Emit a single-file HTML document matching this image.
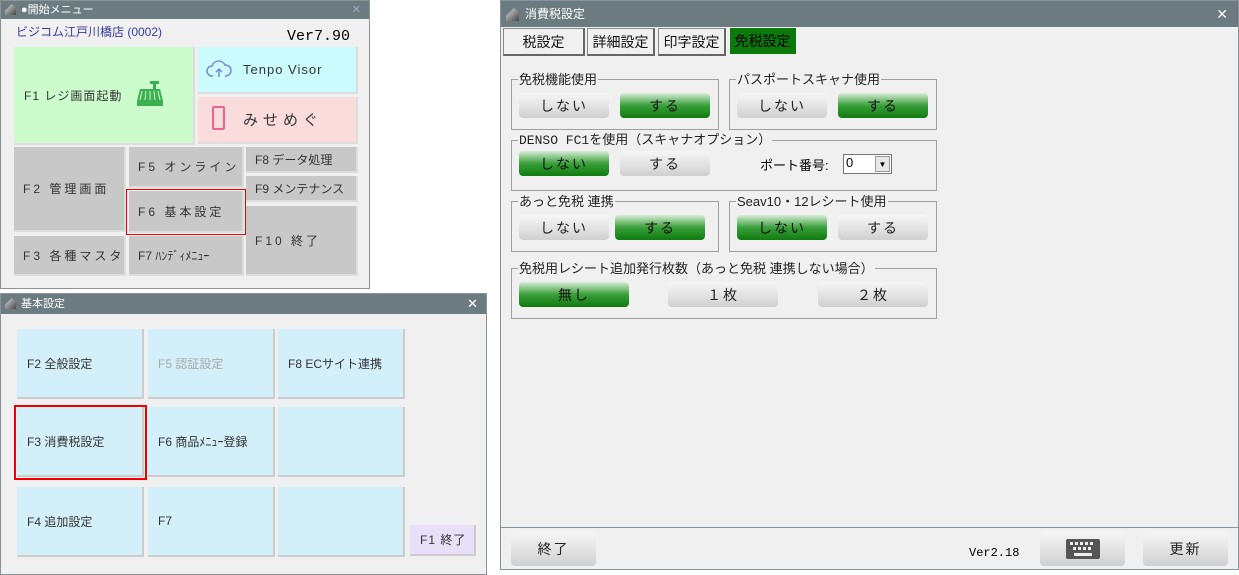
<!DOCTYPE html><html><head><meta charset="utf-8"><style>
*{box-sizing:border-box;margin:0;padding:0}
body{width:1239px;height:575px;background:#fff;position:relative;overflow:hidden;font-family:"Liberation Sans","Noto Sans CJK JP",sans-serif;}
.a{position:absolute}
.win{position:absolute;background:#f0f0f0;border:1px solid #8a9498}
.tb{position:absolute;left:0;right:0;top:0;background:#6b7b80;color:#fff;font-size:11px;padding-left:20px}
.b{position:absolute;display:flex;align-items:center;font-size:12px;color:#333;letter-spacing:1px;white-space:nowrap;overflow:hidden;border-right:2px solid #c8c8c8;border-bottom:2px solid #c8c8c8}
.g{background:#c8c8c8;border-right-color:#ddd;border-bottom-color:#ddd;padding-left:9px}
.c{background:#d3eff9;padding-left:10px;font-size:12px;letter-spacing:0}
.grp{position:absolute;border:1px solid #a0a0a0}
.lab{position:absolute;background:#f0f0f0;font-size:13px;color:#222;top:-8px;left:6px;padding:0 1px;line-height:15px;white-space:nowrap}
.btn{position:absolute;height:25px;border-radius:4px;font-size:14px;display:flex;align-items:center;justify-content:center;letter-spacing:2px;color:#222;background:linear-gradient(#f6f6f6,#e0e0e0 60%,#cfcfcf)}
.on{background:linear-gradient(#d8ecd8,#3aa03a 50%,#0f7a0f);color:#111}
.tab{position:absolute;top:27px;height:28px;border:1px solid #888;border-right:2px solid #666;border-bottom:2px solid #666;background:#f0f0f0;font-size:14px;display:flex;align-items:center;justify-content:center;color:#111}
.icon{position:absolute;left:4px;top:3px;width:11px;height:11px;background:linear-gradient(135deg,#ddd,#444);clip-path:polygon(0 60%,60% 0,100% 30%,100% 100%,0 100%)}
</style></head><body>
<!-- window 1 -->
<div class="win" style="left:0;top:0;width:370px;height:289px">
<div class="tb" style="height:18px;line-height:18px">●開始メニュー<span style="position:absolute;right:8px;color:#aab">✕</span></div><div class="icon"></div>
<div class="a" style="left:15px;top:22px;font-size:12px;color:#3a3aa0">ビジコム江戸川橋店 (0002)</div>
<div class="a" style="left:286px;top:27px;font-size:15px;font-family:'Liberation Mono',monospace;color:#000">Ver7.90</div>
<div class="b" style="left:13px;top:46px;width:181px;height:98px;background:#ccfccc;padding-left:10px;border-color:#ddd">F1 レジ画面起動
<svg class="a" style="left:122px;top:34px" width="28" height="26" viewBox="0 0 28 26"><rect x="14" y="0" width="9" height="3" fill="#3cb050"/><rect x="17" y="3" width="3" height="5" fill="#3cb050"/><path d="M4 8h20l3 12H1z" fill="#3cb050"/><path d="M6 10l-2 9M10 10l-1 9M14 10v9M18 10l1 9M22 10l2 9" stroke="#ccfccc" stroke-width="1"/><rect x="1" y="20" width="26" height="5" fill="#3cb050"/></svg></div>
<div class="b" style="left:197px;top:46px;width:160px;height:47px;background:#ccfbfd;padding-left:45px;font-size:13px;border-color:#ddd">Tenpo Visor
<svg class="a" style="left:8px;top:12px" width="26" height="20" viewBox="0 0 26 20"><path d="M7 17H6a5 5 0 0 1 0-10 7 7 0 0 1 13-1 5 5 0 0 1 1 11h-1" fill="none" stroke="#7a8ad8" stroke-width="1.5"/><path d="M13 18V10M10 13l3-3 3 3" fill="none" stroke="#7a8ad8" stroke-width="1.5"/></svg></div>
<div class="b" style="left:197px;top:96px;width:160px;height:47px;background:#fbdcdc;padding-left:45px;font-size:15px;letter-spacing:5px;border-color:#ddd">みせめぐ
<div class="a" style="left:14px;top:9px;width:13px;height:24px;border:2px solid #f06090;border-radius:2px"></div></div>
<div class="b g" style="left:13px;top:146px;width:112px;height:85px;letter-spacing:3px">F2 管理画面</div>
<div class="b g" style="left:128px;top:146px;width:115px;height:41px;letter-spacing:3px">F5 オンライン</div>
<div class="b g" style="left:128px;top:190px;width:115px;height:42px;letter-spacing:3px">F6 基本設定</div>
<div class="a" style="left:125px;top:188px;width:120px;height:46px;border:1px solid #e00"></div>
<div class="b g" style="left:245px;top:146px;width:112px;height:26px;font-size:12px;letter-spacing:0">F8 データ処理</div>
<div class="b g" style="left:245px;top:175px;width:112px;height:26px;font-size:12px;letter-spacing:0">F9 メンテナンス</div>
<div class="b g" style="left:245px;top:205px;width:112px;height:70px;letter-spacing:3px">F10 終了</div>
<div class="b g" style="left:13px;top:235px;width:112px;height:40px;letter-spacing:3px">F3 各種マスタ</div>
<div class="b g" style="left:128px;top:235px;width:115px;height:40px;font-size:12px;letter-spacing:0">F7 ﾊﾝﾃﾞｨﾒﾆｭｰ</div>
</div>
<!-- window 2 -->
<div class="win" style="left:0;top:293px;width:487px;height:282px">
<div class="tb" style="height:20px;line-height:20px">基本設定<span style="position:absolute;right:8px;font-size:13px">✕</span></div><div class="icon" style="top:4px"></div>
<div class="b c" style="left:16px;top:35px;width:127px;height:70px;border-color:#ccc">F2 全般設定</div>
<div class="b c" style="left:147px;top:35px;width:127px;height:70px;color:#aaa;border-color:#ccc">F5 認証設定</div>
<div class="b c" style="left:277px;top:35px;width:127px;height:70px;border-color:#ccc">F8 ECサイト連携</div>
<div class="b c" style="left:16px;top:113px;width:127px;height:70px;border-color:#ccc">F3 消費税設定</div>
<div class="a" style="left:13px;top:111px;width:133px;height:75px;border:2px solid #e00"></div>
<div class="b c" style="left:147px;top:113px;width:127px;height:70px;border-color:#ccc">F6 商品ﾒﾆｭｰ登録</div>
<div class="b c" style="left:277px;top:113px;width:127px;height:70px;border-color:#ccc"></div>
<div class="b c" style="left:16px;top:193px;width:127px;height:70px;border-color:#ccc">F4 追加設定</div>
<div class="b c" style="left:147px;top:193px;width:127px;height:70px;border-color:#ccc">F7</div>
<div class="b c" style="left:277px;top:193px;width:127px;height:70px;border-color:#ccc"></div>
<div class="b" style="left:409px;top:231px;width:66px;height:31px;background:#e8e0f8;padding-left:10px;font-size:12px;border-color:#ccc">F1 終了</div>
</div>
<!-- window 3 -->
<div class="win" style="left:500px;top:0;width:739px;height:570px">
<div class="tb" style="height:26px;line-height:26px;padding-left:24px;font-size:12px">消費税設定<span style="position:absolute;right:10px;font-size:14px">✕</span></div><div class="icon" style="top:7px;left:5px;width:13px;height:13px"></div>
<div class="tab" style="left:2px;width:82px">税設定</div>
<div class="tab" style="left:86px;width:68px">詳細設定</div>
<div class="tab" style="left:157px;width:68px">印字設定</div>
<div class="tab" style="left:229px;width:66px;background:#0a7a0a;border-color:#0a7a0a;color:#000;height:26px">免税設定</div>
<div class="grp" style="left:10px;top:78px;width:208px;height:51px"><div class="lab">免税機能使用</div></div>
<div class="grp" style="left:228px;top:78px;width:208px;height:51px"><div class="lab">パスポートスキャナ使用</div></div>
<div class="btn" style="left:18px;top:92px;width:90px">しない</div><div class="btn on" style="left:119px;top:92px;width:90px">する</div>
<div class="btn" style="left:236px;top:92px;width:90px">しない</div><div class="btn on" style="left:337px;top:92px;width:90px">する</div>
<div class="grp" style="left:10px;top:139px;width:426px;height:51px"><div class="lab" style="font-family:'Liberation Mono','Noto Sans CJK JP',monospace">DENSO FC1を使用（スキャナオプション）</div></div>
<div class="btn on" style="left:18px;top:150px;width:90px">しない</div><div class="btn" style="left:119px;top:150px;width:90px">する</div>
<div class="a" style="left:259px;top:154px;font-size:13px">ポート番号:</div>
<div class="a" style="left:342px;top:153px;width:49px;height:20px;background:#fff;border:1px solid #777;font-size:13px;padding-left:2px">0<div class="a" style="right:1px;top:1px;width:15px;height:16px;background:#e8e8e8;border:1px solid #999;font-size:8px;text-align:center;line-height:15px">▼</div></div>
<div class="grp" style="left:10px;top:200px;width:208px;height:51px"><div class="lab">あっと免税 連携</div></div>
<div class="grp" style="left:228px;top:200px;width:208px;height:51px"><div class="lab">Seav10・12レシート使用</div></div>
<div class="btn" style="left:18px;top:214px;width:90px">しない</div><div class="btn on" style="left:114px;top:214px;width:90px">する</div>
<div class="btn on" style="left:236px;top:214px;width:90px">しない</div><div class="btn" style="left:337px;top:214px;width:90px">する</div>
<div class="grp" style="left:10px;top:267px;width:426px;height:51px"><div class="lab">免税用レシート追加発行枚数（あっと免税 連携しない場合）</div></div>
<div class="btn on" style="left:18px;top:281px;width:110px">無し</div><div class="btn" style="left:167px;top:281px;width:110px">１枚</div><div class="btn" style="left:317px;top:281px;width:110px">２枚</div>
<div class="a" style="left:0;right:0;top:526px;border-top:1px solid #8a9498"></div>
<div class="btn" style="left:10px;top:530px;width:85px;height:35px">終了</div>
<div class="a" style="left:468px;top:545px;font-size:12px;font-family:'Liberation Mono',monospace">Ver2.18</div>
<div class="btn" style="left:539px;top:530px;width:85px;height:35px"><svg width="34" height="20" viewBox="0 0 34 20"><rect width="34" height="20" rx="2" fill="#555"/><g fill="#eee"><rect x="4" y="3" width="3" height="3"/><rect x="9" y="3" width="3" height="3"/><rect x="14" y="3" width="3" height="3"/><rect x="19" y="3" width="3" height="3"/><rect x="24" y="3" width="3" height="3"/><rect x="7" y="8" width="3" height="3"/><rect x="12" y="8" width="3" height="3"/><rect x="17" y="8" width="3" height="3"/><rect x="22" y="8" width="3" height="3"/><rect x="8" y="14" width="18" height="3"/></g></svg></div>
<div class="btn" style="left:642px;top:530px;width:85px;height:35px">更新</div>
</div>
</body></html>
